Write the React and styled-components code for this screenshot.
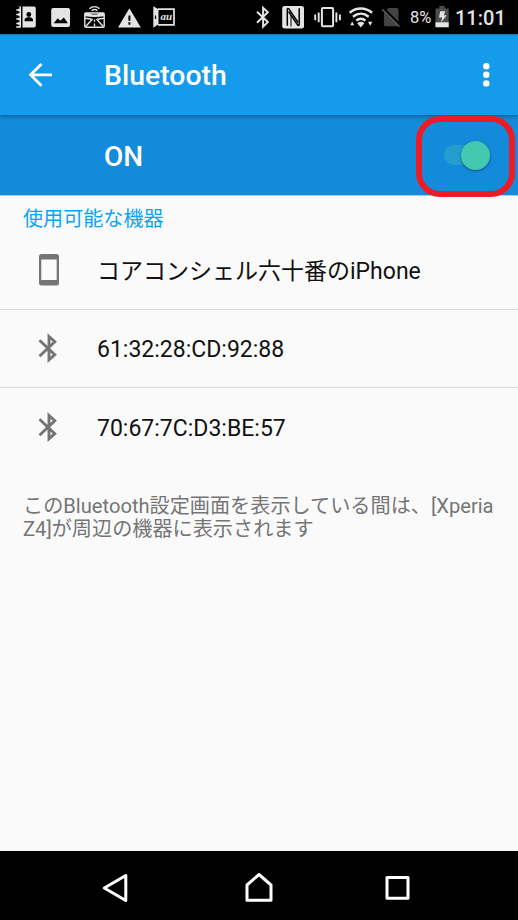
import React, {useState} from 'react'
import styled, {createGlobalStyle} from 'styled-components'

const colors = {
    bar: '#159bec',
    barDark: '#148bda',
    accent: '#0aa3fa',
    knob: '#43c9b0',
    icon: '#757575',
    status: '#e4e4e4',
    marker: '#ed1c24',
}

const GlobalStyle = createGlobalStyle`
body {
    margin: 0;
    background: #fafafa;
    font-family: Roboto, "Noto Sans CJK JP", sans-serif;
}
* {
    box-sizing: border-box;
}
`
const Screen = styled.div`
display: flex;
flex-direction: column;
width: 518px;
height: 920px;
overflow: hidden;
background: #fafafa;
`
const StatusBar = styled.header`
display: flex;
align-items: center;
flex-shrink: 0;
height: 34px;
padding: 0 10px 0 16px;
background: #000;
color: ${colors.status};
`
const StatusIcon = styled.svg`
display: block;
flex-shrink: 0;
width: ${({$width}) => $width}px;
height: 34px;
margin-left: ${({$gap}) => $gap || 0}px;
`
const Battery = styled.span`
width: 24px;
margin-left: 9px;
padding-top: 2px;
font-size: 16.5px;
line-height: 34px;
white-space: nowrap;
`
const Clock = styled.span`
margin-left: 6px;
padding-top: 2px;
font-size: 20px;
font-weight: 500;
line-height: 34px;
white-space: nowrap;
`
const AppBar = styled.div`
position: relative;
z-index: 1;
display: flex;
align-items: center;
flex-shrink: 0;
height: 81px;
padding: 0 28px;
background: ${colors.bar};
border-top: 1px solid #1179b8;
box-shadow: 0 1px 5px rgba( 0, 0, 0, 0.4 );
`
const BarButton = styled.button`
display: flex;
padding: 0;
border: none;
outline: none;
background-color: transparent;
`
const Title = styled.h1`
flex: 1;
margin: 2px 0 0 51px;
font-size: 28.4px;
font-weight: 500;
line-height: 34px;
color: #fff;
`
const SwitchBar = styled.div`
position: relative;
display: flex;
align-items: center;
justify-content: space-between;
flex-shrink: 0;
height: 81px;
padding: 0 28px 0 104px;
background: ${colors.barDark};
border-bottom: 1px solid #b5c9ee;
`
const SwitchLabel = styled.span`
margin-top: 3px;
font-size: 28px;
font-weight: 500;
line-height: 34px;
color: #fff;
`
const Track = styled.button`
position: relative;
width: 46px;
height: 20px;
padding: 0;
border: none;
outline: none;
border-radius: 10px;
background: ${({$on}) => $on ? '#259dcf' : '#4b89b5'};
`
const Knob = styled.span`
position: absolute;
top: -4.5px;
left: ${({$on}) => $on ? 17 : 0}px;
width: 29px;
height: 29px;
border-radius: 50%;
background: ${({$on}) => $on ? colors.knob : '#f1f1f1'};
box-shadow: 0 1px 3px rgba( 0, 0, 0, 0.4 );
`
const Marker = styled.div`
position: absolute;
z-index: 2;
top: 1px;
left: 416px;
width: 99px;
height: 81px;
border: 6px solid ${colors.marker};
border-radius: 24px;
pointer-events: none;
`
const Content = styled.main`
flex: 1;
`
const SectionTitle = styled.h2`
margin: 0;
padding: 11px 23px 0;
height: 35px;
font-size: 20.1px;
font-weight: 400;
line-height: 25px;
color: ${colors.accent};
`
const DeviceRow = styled.div`
display: flex;
align-items: center;
height: 78.5px;
padding-left: 36px;
border-bottom: ${({$last}) => $last ? 'none' : '1px solid #dadada'};
`
const DeviceIcon = styled.svg`
display: block;
width: 26px;
height: 34px;
`
const DeviceName = styled.span`
margin-left: 35px;
padding-top: 4px;
font-size: 23px;
line-height: 30px;
white-space: nowrap;
color: #111;
`
const Note = styled.p`
margin: 28px 0 0;
padding: 0 23px;
font-size: 20.15px;
line-height: 23.5px;
white-space: nowrap;
color: #757575;
`
const NavBar = styled.nav`
display: flex;
align-items: center;
justify-content: space-between;
flex-shrink: 0;
height: 69px;
padding: 3px 106px 0 101px;
background: #000;
`
const NavIcon = styled.svg`
display: block;
width: 30px;
height: 32px;
overflow: visible;
fill: none;
stroke: #fff;
stroke-width: 3;
stroke-linejoin: round;
`

const devices = [
    {id: 1, type: 'phone', name: 'コアコンシェル六十番のiPhone'},
    {id: 2, type: 'bluetooth', name: '61:32:28:CD:92:88'},
    {id: 3, type: 'bluetooth', name: '70:67:7C:D3:BE:57'},
]

const StatusIcons = () => (
    <>
        {/* contacts */}
        <StatusIcon $width={20} viewBox="16 0 20 34" fill={colors.status}>
            <path d="M22.5 6.5H34a1.8 1.8 0 0 1 1.8 1.8v17.4a1.8 1.8 0 0 1-1.8 1.8H22.5z"/>
            <path d="M18 6.5h3v21h-3z"/>
            <path d="M16 7.8h3.5M16 12.3h3.5M16 16.8h3.5M16 21.3h3.5M16 25.8h3.5" stroke="#000" strokeWidth="2"/>
            <path d="M16.2 10h4M16.2 14.5h4M16.2 19h4M16.2 23.5h4M16.2 27h4" stroke={colors.status} strokeWidth="1.5"/>
            <circle cx="28.8" cy="14.5" r="2.4" fill="#000"/>
            <path d="M24.6 21.2v-1.4c0-2 2.7-2.6 4.2-2.6s4.2.6 4.2 2.6v1.4z" fill="#000"/>
        </StatusIcon>
        {/* picture */}
        <StatusIcon $width={20} $gap={15} viewBox="51 0 20 34">
            <rect x="51.2" y="8" width="18.8" height="19" rx="2" fill={colors.status}/>
            <path d="M53.7 23.2l4-5 2.6 2.5 3.6-3.2 4 5.7z" fill="#000"/>
        </StatusIcon>
        {/* panorama upload */}
        <StatusIcon $width={22} $gap={13} viewBox="84 0 22 34" fill="none" stroke={colors.status}>
            <path d="M89.5 8.7c3-2.7 7-2.7 10 0M91.6 10.8c1.9-1.6 4-1.6 5.8 0" strokeWidth="1.5"/>
            <rect x="84.8" y="13" width="19.4" height="14.3" rx="1" strokeWidth="1.4"/>
            <path d="M85 13h5l2 1.5h5l2-1.5h5v3.2c-6 1-13 1-19 0z" fill={colors.status} stroke="none"/>
            <path d="M85 18.3l7 .9M104 18.3l-7 .9M92.5 19l-6.8 7.5M96.5 19l6.8 7.5M94.5 19.5v2.3M94.5 23.5v3" strokeWidth="1.4"/>
        </StatusIcon>
        {/* warning */}
        <StatusIcon $width={24} $gap={12} viewBox="118 0 24 34">
            <path d="M129.4 8.2L140.8 27.6H118z" fill={colors.status}/>
            <path d="M129.4 15.5v5.2M129.4 22.3v2.4" stroke="#000" strokeWidth="2"/>
        </StatusIcon>
        {/* carrier door */}
        <StatusIcon $width={23} $gap={11} viewBox="153 0 23 34">
            <path d="M153.3 6.2l5.2 3v15l-5.2 3.5z" fill={colors.status}/>
            <path d="M155.5 15.5v3.5" stroke="#000" strokeWidth="1.2"/>
            <path d="M158 9.2h16v15.6h-16" fill="none" stroke={colors.status} strokeWidth="1.7"/>
            <text x="160.5" y="19.5" fontFamily="Liberation Serif, serif" fontSize="11" fontStyle="italic" fontWeight="700" fill={colors.status}>au</text>
        </StatusIcon>
        {/* bluetooth */}
        <StatusIcon $width={14} $gap={80} viewBox="256 0 14 34">
            <path d="M257 11.8l10.8 10.3-4.7 4.6V7.8l4.7 4.4L257 22.7" fill="none" stroke={colors.status} strokeWidth="2"/>
        </StatusIcon>
        {/* nfc */}
        <StatusIcon $width={22} $gap={12} viewBox="282 0 22 34">
            <rect x="282.2" y="6" width="21.8" height="22.4" rx="2.5" fill={colors.status}/>
            <path d="M287.3 25.8V9.3q.3-1.6 1.6-.4l9.2 13.6" fill="none" stroke="#000" strokeWidth="1.5"/>
            <path d="M299.2 8.3v16.2q-.3 1.6-1.6.4L288.600 11.500" fill="none" stroke="#000" strokeWidth="1.5"/>
            <path d="M291 15v11.500" fill="none" stroke="#000" strokeWidth="1"/>
        </StatusIcon>
        {/* vibrate */}
        <StatusIcon $width={28} $gap={10} viewBox="314 0 28 34" fill="none" stroke={colors.status}>
            <rect x="321.9" y="8" width="11.2" height="18.3" rx="1" strokeWidth="2"/>
            <path d="M315.2 14.5v5.7M318.7 12.5v9.8M336.4 12.5v9.8M339.9 14.5v5.7" strokeWidth="1.9"/>
        </StatusIcon>
        {/* wifi with traffic arrows */}
        <StatusIcon $width={25} $gap={7} viewBox="349 0 25 34" fill="none" stroke={colors.status}>
            <path d="M349.6 12.8c6.7-5.7 15.8-5.7 22.5 0M353 16.8c4.8-4 10.9-4 15.7 0M356.2 20.6c2.9-2.4 6.4-2.4 9.3 0" strokeWidth="2.5"/>
            <path d="M357.2 23.2c2.2-1.8 5-1.8 7.2 0l-3.6 4.4zM350.2 25.2l2-3.6 2 3.6zM368 21.8h4.4l-2.2 4z" fill={colors.status} stroke="none"/>
        </StatusIcon>
        {/* no sim */}
        <StatusIcon $width={19} $gap={8} viewBox="382 0 19 34">
            <path d="M388.5 8h8.2a1.8 1.8 0 0 1 1.8 1.8v14.7a1.8 1.8 0 0 1-1.8 1.8h-11a1.8 1.8 0 0 1-1.8-1.8V12.5z" fill="#444"/>
            <path d="M383.5 8.2l17 17" stroke="#000" strokeWidth="2"/>
            <path d="M382.2 9.2L399.4 26.6" stroke="#555" strokeWidth="1.6"/>
        </StatusIcon>
    </>
)

const BatteryIcon = () => (
    <StatusIcon $width={14} $gap={1} viewBox="435 0 14 34">
        <path d="M439.3 6h5.4v2.4h4V27.2h-13.2V8.4h3.8z" fill="#4d4d4d"/>
        <path d="M435.5 22.3h13.2v4.9h-13.2z" fill={colors.status}/>
        <path d="M440.2 11.2h5.2l-1.8 4h3l-5.5 7.2 1.1-5h-3.2z" fill={colors.status}/>
    </StatusIcon>
)

const Icon = ({type}) => (
    <DeviceIcon viewBox="36 0 26 34">
        {type === 'phone' ? (
            <path fillRule="evenodd" fill={colors.icon} d="M41.5 1h15a2.5 2.5 0 0 1 2.5 2.5v26.5a2.5 2.5 0 0 1-2.5 2.5h-15A2.5 2.5 0 0 1 39 30V3.5A2.5 2.5 0 0 1 41.5 1zM41.3 6.500V27h15.4V6.500z"/>
        ) : (
            <path d="M39.5 9.2L54.8 23.6 49 28.8V5.5l5.8 5.2L39.5 25.2" fill="none" stroke={colors.icon} strokeWidth="2.9"/>
        )}
    </DeviceIcon>
)

const App = () => {
    const [on, setOn] = useState(true)

    return (
        <Screen>
            <GlobalStyle/>
            <StatusBar>
                <StatusIcons/>
                <Battery>8%</Battery>
                <BatteryIcon/>
                <Clock>11:01</Clock>
            </StatusBar>
            <AppBar>
                <BarButton>
                    <svg width="25" height="26" viewBox="28 62 25 26" fill="none" stroke="#fff" strokeWidth="2.8">
                        <path d="M52 74.8H31M41.5 63.9L30.6 74.8l10.9 10.9"/>
                    </svg>
                </BarButton>
                <Title>Bluetooth</Title>
                <BarButton>
                    <svg width="8" height="26" viewBox="0 0 8 26" fill="#fff">
                        <circle cx="4.3" cy="4.2" r="3.2"/>
                        <circle cx="4.3" cy="12.8" r="3.2"/>
                        <circle cx="4.3" cy="21.4" r="3.2"/>
                    </svg>
                </BarButton>
            </AppBar>
            <SwitchBar>
                <SwitchLabel>{on ? 'ON' : 'OFF'}</SwitchLabel>
                <Track $on={on} onClick={() => setOn(!on)}>
                    <Knob $on={on}/>
                </Track>
                <Marker/>
            </SwitchBar>
            <Content>
                <SectionTitle>使用可能な機器</SectionTitle>
                {devices.map((device, index) =>
                    <DeviceRow key={device.id} $last={index === devices.length - 1}>
                        <Icon type={device.type}/>
                        <DeviceName>{device.name}</DeviceName>
                    </DeviceRow>
                )}
                <Note>
                    このBluetooth設定画面を表示している間は、[Xperia<br/>
                    Z4]が周辺の機器に表示されます
                </Note>
            </Content>
            <NavBar>
                <NavIcon viewBox="101 871 30 32">
                    <path d="M125.800 875.500v25L104.300 888z"/>
                </NavIcon>
                <NavIcon viewBox="242 871 30 32">
                    <path d="M247 900.300V885l12-10.500L271 885v15.300z"/>
                </NavIcon>
                <NavIcon viewBox="382 871 30 32">
                    <rect x="387" y="877.500" width="21" height="20.800"/>
                </NavIcon>
            </NavBar>
        </Screen>
    )
}

export default App
